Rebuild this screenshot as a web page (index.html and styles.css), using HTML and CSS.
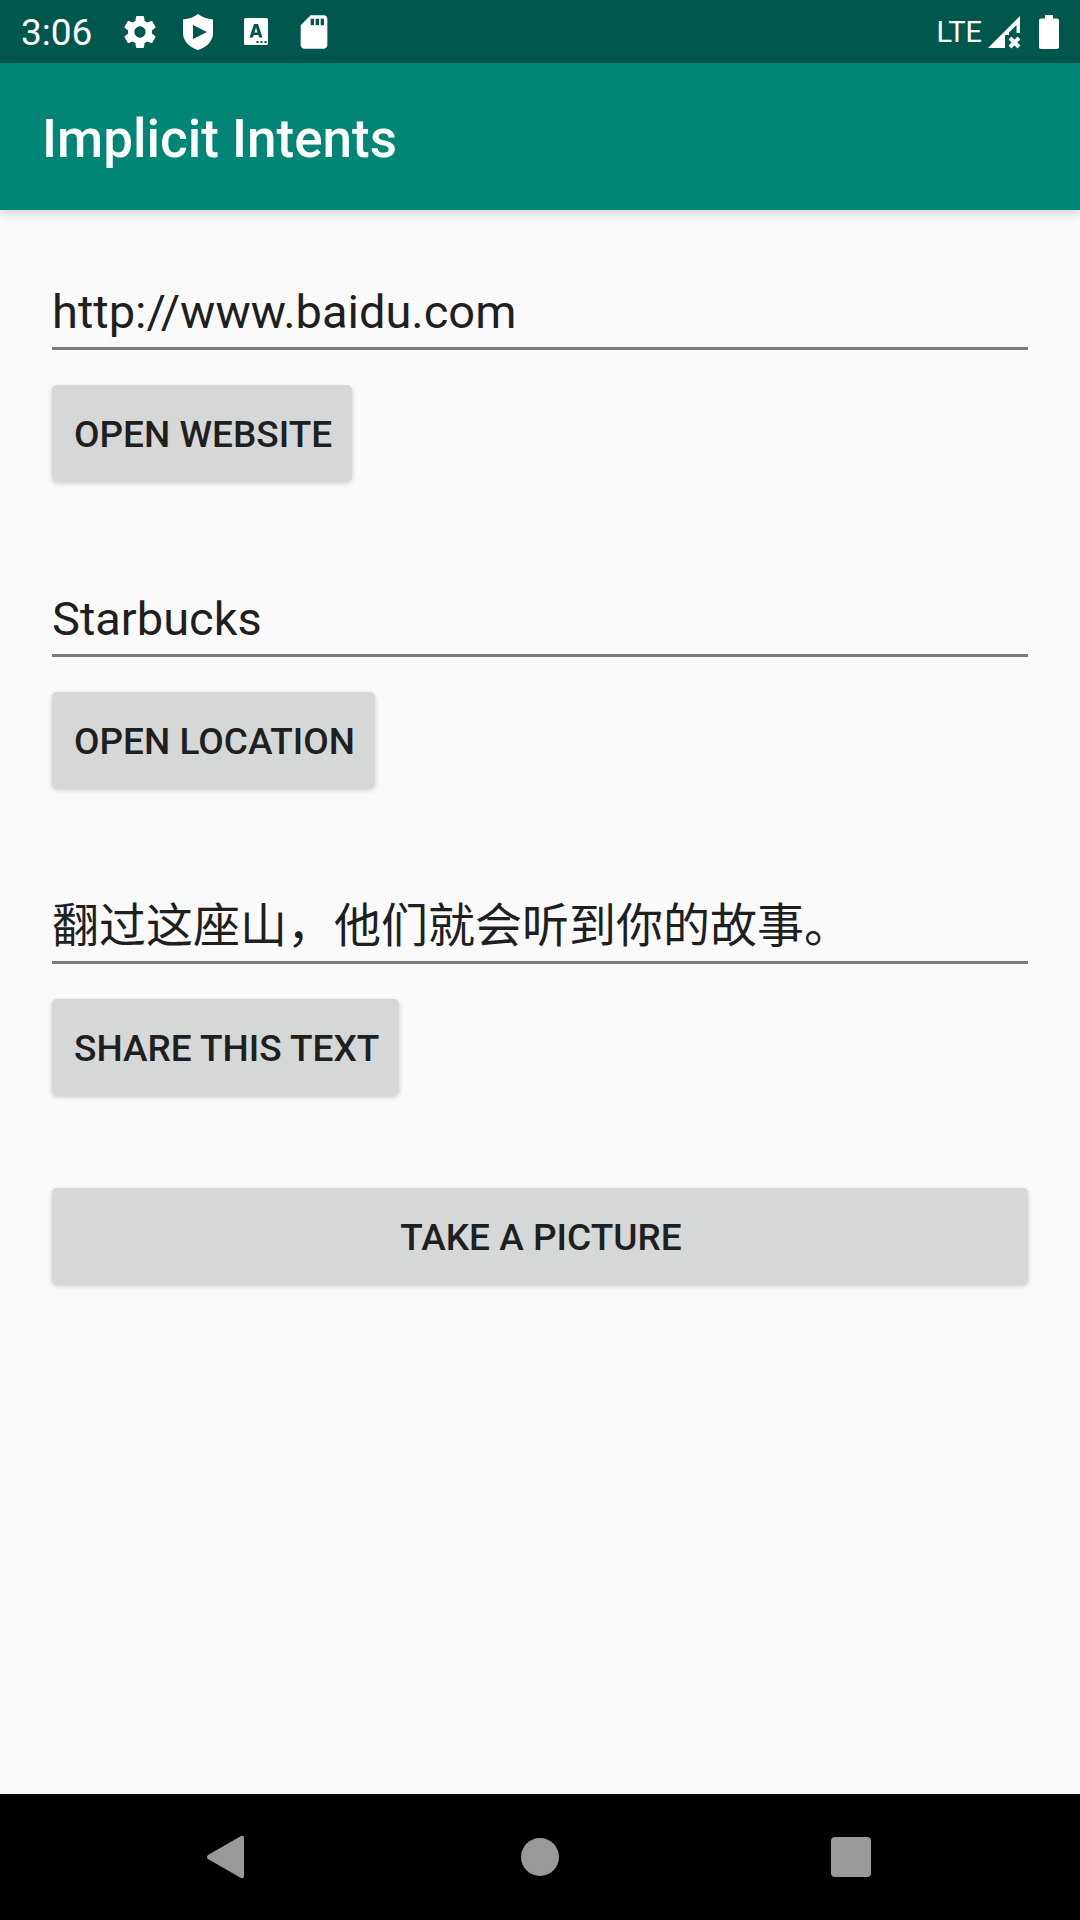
FILE: index.html
```html
<!DOCTYPE html>
<html lang="en">
<head>
<meta charset="utf-8">
<meta name="viewport" content="width=device-width, initial-scale=1">
<title>Implicit Intents</title>
<link rel="stylesheet" href="styles.css">
</head>
<body>
<div class="status-bar">
  <span class="clock">3:06</span>
  <div class="notifications">
    <svg class="status-icon" viewBox="0 0 24 24" aria-hidden="true"><path d="M19.14 12.94c.04-.3.06-.61.06-.94 0-.32-.02-.64-.07-.94l2.03-1.58a.49.49 0 0 0 .12-.61l-1.92-3.32a.488.488 0 0 0-.59-.22l-2.39.96c-.5-.38-1.03-.7-1.62-.94l-.36-2.54a.484.484 0 0 0-.48-.41h-3.84c-.24 0-.43.17-.47.41l-.36 2.54c-.59.24-1.13.57-1.62.94l-2.39-.96c-.22-.08-.47 0-.59.22L2.74 8.87c-.12.21-.08.47.12.61l2.03 1.58c-.05.3-.09.63-.09.94s.02.64.07.94l-2.03 1.58a.49.49 0 0 0-.12.61l1.92 3.32c.12.22.37.29.59.22l2.39-.96c.5.38 1.03.7 1.62.94l.36 2.54c.05.24.24.41.48.41h3.84c.24 0 .44-.17.47-.41l.36-2.54c.59-.24 1.13-.56 1.62-.94l2.39.96c.22.08.47 0 .59-.22l1.92-3.32c.12-.22.07-.47-.12-.61l-2.01-1.58zM12 15.4a3.4 3.4 0 1 1 0-6.8 3.4 3.4 0 0 1 0 6.8z"/></svg>
    <svg class="status-icon" viewBox="0 0 40 40" aria-hidden="true"><path fill-rule="evenodd" d="M20 2Q26 6.500 35 7.500V21C35 29 29 35 20 38C11 35 5 29 5 21V7.500Q14 6.500 20 2ZM15 13V27L29 20Z"/></svg>
    <svg class="status-icon" viewBox="0 0 40 40" aria-hidden="true"><path fill-rule="evenodd" d="M9.500 6H30.500Q32 6 32 7.500V31.500Q32 33 30.500 33H9.500Q8 33 8 31.500V7.500Q8 6 9.500 6ZM18 12L13.500 25.500H17L17.700 23H22.300L23 25.500H26.500L22 12ZM20 15.500L21.500 20.500H18.500ZM20.500 29V31H22.500V29ZM24.500 29V31H26.500V29ZM28.500 29V31H30.500V29Z"/></svg>
    <svg class="status-icon" viewBox="0 0 24 24" aria-hidden="true"><path d="M18 2h-8L4.020 8 4 20c0 1.100.9 2 2 2h12c1.100 0 2-.9 2-2V4c0-1.100-.9-2-2-2zm-6 6h-2V4h2v4zm3 0h-2V4h2v4zm3 0h-2V4h2v4z"/></svg>
  </div>
  <div class="system">
    <span class="network">LTE</span>
    <svg class="signal" viewBox="0 0 34 34" aria-hidden="true"><path d="M33 1V18H29.500V10L22 17.500V20H18V33H1Z"/><path class="cross" d="M23 23L32 32M32 23L23 32"/></svg>
    <svg class="battery" viewBox="0 0 20 34" aria-hidden="true"><path d="M6 0H14V3.500H18Q20 3.500 20 5.500V32Q20 34 18 34H2Q0 34 0 32V5.500Q0 3.500 2 3.500H6Z"/></svg>
  </div>
</div>
<header class="app-bar"><h1 class="app-title">Implicit Intents</h1></header>
<main class="content">
  <form class="intent">
    <input class="field" type="text" aria-label="Website" value="http://www.baidu.com">
    <button class="button" type="button">OPEN WEBSITE</button>
  </form>
  <form class="intent">
    <input class="field" type="text" aria-label="Location" value="Starbucks">
    <button class="button" type="button">OPEN LOCATION</button>
  </form>
  <form class="intent">
    <input class="field" type="text" lang="zh-CN" aria-label="Text to share" value="翻过这座山，他们就会听到你的故事。">
    <button class="button" type="button">SHARE THIS TEXT</button>
  </form>
  <button class="button button-wide" type="button">TAKE A PICTURE</button>
</main>
<nav class="nav-bar">
  <button class="nav-button" type="button" aria-label="Back"><svg class="nav-icon" viewBox="0 0 44 44" aria-hidden="true"><path d="M37 3V41Q37 44 34 43L1 24Q-1 22 1 20L34 1Q37 0 37 3Z"/></svg></button>
  <button class="nav-button" type="button" aria-label="Home"><svg class="nav-icon" viewBox="0 0 44 44" aria-hidden="true"><circle cx="22" cy="22" r="19"/></svg></button>
  <button class="nav-button" type="button" aria-label="Recent apps"><svg class="nav-icon" viewBox="0 0 44 44" aria-hidden="true"><rect x="2" y="2" width="40" height="40" rx="4"/></svg></button>
</nav>
</body>
</html>
```
FILE: styles.css
```css
* {
  box-sizing: border-box;
}

body {
  display: flex;
  flex-direction: column;
  min-height: 100vh;
  margin: 0;
  background: #fafafa;
  color: #1f1f1f;
  font-family: Roboto, "Noto Sans CJK SC", sans-serif;
}

.status-bar {
  display: flex;
  align-items: center;
  height: 63px;
  padding: 0 21px;
  background: #00574b;
  color: #fff;
}

.status-bar svg {
  display: block;
  fill: #fff;
}

.clock {
  padding-top: 2px;
  font-size: 37px;
  line-height: 44px;
}

.notifications {
  display: flex;
  gap: 18px;
  margin-left: 28px;
}

.status-icon {
  width: 40px;
  height: 40px;
}

.system {
  display: flex;
  align-items: center;
  margin-left: auto;
}

.network {
  font-size: 29px;
  line-height: 40px;
}

.signal {
  width: 34px;
  height: 34px;
  margin: 0 18px 0 5px;
}

.cross {
  fill: none;
  stroke: #fff;
  stroke-width: 4px;
}

.battery {
  width: 20px;
  height: 34px;
}

.app-bar {
  display: flex;
  align-items: center;
  height: 147px;
  padding: 4px 42px 0;
  background: #008577;
  color: #fff;
  box-shadow: 0 3px 12px rgba(0, 0, 0, 0.18);
}

.app-title {
  margin: 0;
  font-size: 53px;
  font-weight: 500;
  line-height: 64px;
}

.content {
  display: flex;
  flex: 1;
  flex-direction: column;
  gap: 93px;
  padding: 57px 52px;
}

.intent {
  display: flex;
  flex-direction: column;
  align-items: flex-start;
  gap: 35px;
}

.field {
  width: 100%;
  height: 83px;
  padding: 8px 0 0;
  border: 0;
  border-bottom: 3px solid #7b7b7b;
  border-radius: 0;
  outline: 0;
  background: transparent;
  color: inherit;
  font-family: inherit;
  font-size: 47px;
  line-height: 56px;
}

.field:lang(zh) {
  padding-top: 0;
}

.button {
  height: 96px;
  padding: 2px 20px 0 22px;
  border: 0;
  border-radius: 5px;
  background: #d6d7d7;
  box-shadow: 0 2px 5px rgba(0, 0, 0, 0.2);
  color: inherit;
  font-family: inherit;
  font-size: 37px;
  font-weight: 500;
}

.button-wide {
  width: 100%;
}

.nav-bar {
  display: flex;
  align-items: center;
  justify-content: center;
  gap: 186px;
  height: 126px;
  background: #000;
}

.nav-button {
  display: flex;
  align-items: center;
  justify-content: center;
  width: 125px;
  height: 126px;
  padding: 0;
  border: 0;
  background: transparent;
}

.nav-icon {
  width: 44px;
  height: 44px;
  overflow: visible;
  fill: #999;
}
```
